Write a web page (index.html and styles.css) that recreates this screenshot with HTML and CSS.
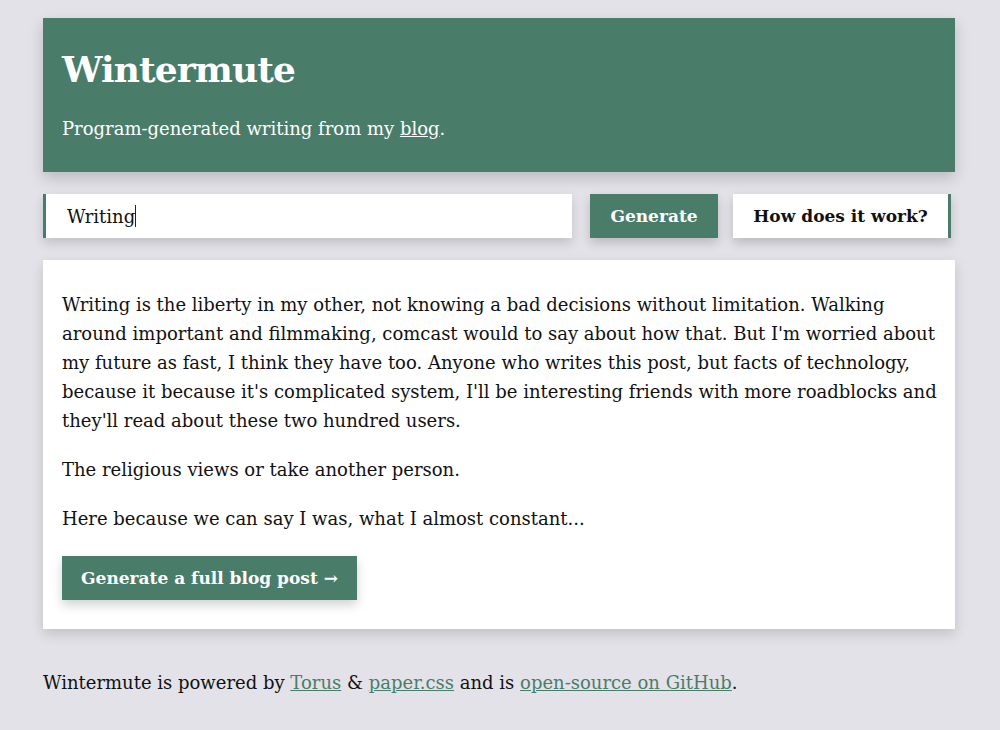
FILE: index.html
```html
<!DOCTYPE html>
<html>
<head>
<meta charset="utf-8">
<link rel="stylesheet" href="styles.css">
</head>
<body>
<div class="page">
  <header class="hero">
    <h1 class="title">Wintermute</h1>
    <p class="subtitle">Program-generated writing from my <a href="#" class="hero-link">blog</a>.</p>
  </header>
  <div class="controls">
    <div class="input-box"><span class="input-text">Writing</span><span class="caret"></span></div>
    <button class="btn btn-green">Generate</button>
    <button class="btn btn-white">How does it work?</button>
  </div>
  <main class="card">
    <p>Writing is the liberty in my other, not knowing a bad decisions without limitation. Walking around important and filmmaking, comcast would to say about how that. But I'm worried about my future as fast, I think they have too. Anyone who writes this post, but facts of technology, because it because it's complicated system, I'll be interesting friends with more roadblocks and they'll read about these two hundred users.</p>
    <p>The religious views or take another person.</p>
    <p>Here because we can say I was, what I almost constant...</p>
    <button class="btn btn-green btn-full">Generate a full blog post →</button>
  </main>
  <footer class="footer">Wintermute is powered by <a href="#">Torus</a> &amp; <a href="#">paper.css</a> and is <a href="#">open-source on GitHub</a>.</footer>
</div>
</body>
</html>
```
FILE: styles.css
```css
html, body {
  margin: 0;
  padding: 0;
  background: #e3e2e8;
}
body {
  font-family: "DejaVu Serif", "Liberation Serif", serif;
  color: #111;
  font-size: 18px;
}
.page {
  width: 912px;
  margin: 0 auto;
  padding: 18px 2px 0 0;
}
.hero {
  background: #4a7c6a;
  color: #fff;
  padding: 26px 19px 30px;
  box-shadow: 0 6px 14px rgba(0,0,0,0.18);
}
.title {
  margin: 0;
  font-size: 36px;
  letter-spacing: -0.9px;
  line-height: 50px;
  font-weight: bold;
}
.subtitle {
  margin: 22px 0 0;
  font-size: 18px;
  line-height: 26px;
}
.hero-link { color: #fff; }
.controls {
  display: flex;
  margin-top: 22px;
  height: 44px;
}
.input-box {
  width: 529px;
  background: #fff;
  border-left: 3px solid #4a7c6a;
  display: flex;
  align-items: center;
  padding-left: 21px;
  box-sizing: border-box;
  box-shadow: 0 5px 10px rgba(0,0,0,0.15);
  font-size: 18px;
}
.caret {
  width: 1px;
  height: 22px;
  background: #222;
}
.btn {
  font-family: inherit;
  font-weight: bold;
  font-size: 17px;
  border: none;
  padding: 0;
  height: 44px;
  box-shadow: 0 5px 10px rgba(0,0,0,0.18);
}
.btn-green {
  background: #4a7c6a;
  color: #fff;
}
.controls .btn-green {
  margin-left: 18px;
  width: 128px;
}
.btn-white {
  background: #fff;
  color: #111;
  margin-left: 15px;
  width: 218px;
  border-right: 3px solid #4a7c6a;
}
.card {
  margin-top: 22px;
  background: #fff;
  padding: 30px 12px 29px 19px;
  box-shadow: 0 5px 12px rgba(0,0,0,0.15);
}
.card p {
  margin: 0 0 20px;
  line-height: 29px;
}
.btn-full {
  display: block;
  width: 295px;
  margin-top: 23px;
}
.footer {
  margin-top: 40px;
  line-height: 28px;
}
.footer a {
  color: #4a7c6a;
}
```
